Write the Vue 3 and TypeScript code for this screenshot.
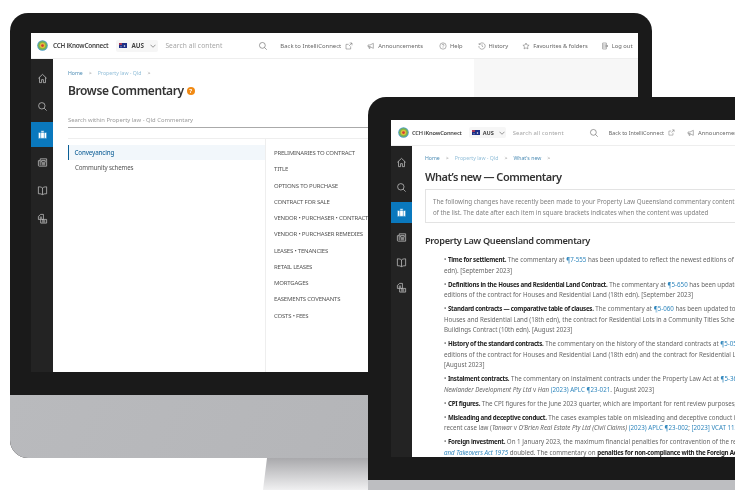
<script setup lang="ts">
const icons: Record<string, string> = {
  home: 'M3 11.5 12 3l9 8.5M5.5 9.5V21h4.5v-6.5h4V21h4.5V9.5',
  search: 'M10.5 3.5a7 7 0 1 0 0 14 7 7 0 0 0 0-14ZM15.7 15.7 21 21',
  brief: 'M3 7.5h18v13H3zM8.5 7.5V4h7v3.5M8 7.5v13M16 7.5v13',
  news: 'M7 4h14v16H5a2 2 0 0 1-2-2V8h4M7 4v14M10 7.5h8v4h-8zM10 14.5h8M10 17h8',
  book: 'M12 6.5C10 4.5 7 4 3 4v15c4 0 7 .5 9 2 2-1.5 5-2 9-2V4c-4 0-7 .5-9 2.5ZM12 6.5V21',
  docs: 'M3 7.500 8 3h6v11H3zM6 9h5M6 11.500h5M11 14h10v8H8v-8M11 17h7M11 19.500h7',
  ext: 'M17 13v8H3V7h8M14 3h7v7M21 3l-9 9',
  ann: 'M3 9h6l10-5v15L9 14H3zM6 14v5h3v-5',
  help: 'M12 2.5a9.5 9.5 0 1 0 0 19 9.5 9.5 0 0 0 0-19ZM9 9.5C9 7.5 10.500 6.500 12 6.500s3 1 3 3-3 2.500-3 4.500M12 16.500v1.500',
  hist: 'M4 7a9.500 9.500 0 1 1-1.500 5M3.500 3v4.500H8M12 7v5.500l3.500 2',
  star: 'M12 3l2.800 6 6.500.8-4.800 4.400 1.300 6.500L12 17.500l-5.800 3.200 1.300-6.500-4.800-4.400 6.500-.8z',
  out: 'M5 3h11v18H5zM5 9h11M5 15h11M13 12h8M18.500 9.500 21 12l-2.500 2.500'
}
const side = ['home', 'search', 'brief', 'news', 'book', 'docs']
const topics = ['PRELIMINARIES TO CONTRACT', 'TITLE', 'OPTIONS TO PURCHASE', 'CONTRACT FOR SALE', 'VENDOR • PURCHASER • CONTRACT TERMS', 'VENDOR • PURCHASER REMEDIES', 'LEASES • TENANCIES', 'RETAIL LEASES', 'MORTGAGES', 'EASEMENTS COVENANTS', 'COSTS • FEES']
const nav = [
  { icon: 'ann', label: 'Announcements', gap: 'n-ann' },
  { icon: 'help', label: 'Help', gap: 'n-help' },
  { icon: 'hist', label: 'History', gap: 'n-hist' },
  { icon: 'star', label: 'Favourites & folders', gap: 'n-star' },
  { icon: 'out', label: 'Log out', gap: 'n-out' }
]
</script>

<template>
  <div class="canvas">
    <div class="stand"></div>

    <section class="monitor m1">
      <div class="screen">
        <header class="top">
          <svg class="logo" viewBox="0 0 24 24"><circle cx="12" cy="12" r="11.500" fill="#4f9fc0"/><circle cx="12" cy="12" r="9.500" fill="#7fb446"/><circle cx="12" cy="12" r="6" fill="#d9c23c"/><circle cx="12" cy="12" r="3" fill="#d63a35"/></svg>
          <span class="brand">CCH iKnowConnect</span>
          <div class="pill">
            <svg class="flag" viewBox="0 0 16 10"><rect width="16" height="10" fill="#1c2f86"/><rect width="6" height="4" fill="#a5395a"/><circle cx="11" cy="6" r="1.500" fill="#fff"/><circle cx="4" cy="7.500" r="1" fill="#fff"/></svg>
            <b>AUS</b>
            <svg class="chev" viewBox="0 0 12 8"><path d="M1 1.500 6 6.500l5-5" fill="none" stroke="#555" stroke-width="1.200"/></svg>
          </div>
          <span class="ph">Search all content</span>
          <svg class="ic sicon" viewBox="0 0 24 24"><path :d="icons.search"/></svg>
          <span class="link back">Back to IntelliConnect</span>
          <svg class="ic small ext" viewBox="0 0 24 24"><path :d="icons.ext"/></svg>
          <span v-for="n in nav" :key="n.label" class="nav" :class="n.gap">
            <svg class="ic small" viewBox="0 0 24 24"><path :d="icons[n.icon]"/></svg>
            <span class="link">{{ n.label }}</span>
          </span>
        </header>
        <div class="body">
          <aside class="side">
            <div v-for="s in side" :key="s" class="sitem" :class="{ on: s === 'brief' }">
              <svg viewBox="0 0 24 24"><path :d="icons[s]"/></svg>
            </div>
          </aside>
          <main class="main">
            <div class="content">
              <div class="crumbs"><span class="dark">Home</span><i>&gt;</i><span>Property law - Qld</span><i>&gt;</i></div>
              <h1>Browse Commentary<span class="q">?</span></h1>
              <div class="within">Search within Property law - Qld Commentary</div>
              <div class="cols">
                <div class="left">
                  <div class="row sel">Conveyancing</div>
                  <div class="row">Community schemes</div>
                </div>
                <ul class="right">
                  <li v-for="t in topics" :key="t">{{ t }}</li>
                </ul>
              </div>
            </div>
            <div class="gutter"></div>
          </main>
        </div>
      </div>
      <div class="bezel"></div>
      <div class="chin"></div>
    </section>

    <section class="monitor m2">
      <div class="screen">
        <header class="top">
          <svg class="logo" viewBox="0 0 24 24"><circle cx="12" cy="12" r="11.500" fill="#4f9fc0"/><circle cx="12" cy="12" r="9.500" fill="#7fb446"/><circle cx="12" cy="12" r="6" fill="#d9c23c"/><circle cx="12" cy="12" r="3" fill="#d63a35"/></svg>
          <span class="brand">CCH iKnowConnect</span>
          <div class="pill">
            <svg class="flag" viewBox="0 0 16 10"><rect width="16" height="10" fill="#1c2f86"/><rect width="6" height="4" fill="#a5395a"/><circle cx="11" cy="6" r="1.500" fill="#fff"/><circle cx="4" cy="7.500" r="1" fill="#fff"/></svg>
            <b>AUS</b>
            <svg class="chev" viewBox="0 0 12 8"><path d="M1 1.500 6 6.500l5-5" fill="none" stroke="#555" stroke-width="1.200"/></svg>
          </div>
          <span class="ph">Search all content</span>
          <svg class="ic sicon" viewBox="0 0 24 24"><path :d="icons.search"/></svg>
          <span class="link back">Back to IntelliConnect</span>
          <svg class="ic small ext" viewBox="0 0 24 24"><path :d="icons.ext"/></svg>
          <span class="nav n-ann">
            <svg class="ic small" viewBox="0 0 24 24"><path :d="icons.ann"/></svg>
            <span class="link">Announcements</span>
          </span>
        </header>
        <div class="body">
          <aside class="side">
            <div v-for="s in side" :key="s" class="sitem" :class="{ on: s === 'brief' }">
              <svg viewBox="0 0 24 24"><path :d="icons[s]"/></svg>
            </div>
          </aside>
          <main class="main article">
            <div class="crumbs"><span class="dark">Home</span><i>&gt;</i><span>Property law - Qld</span><i>&gt;</i><span class="dark">What's new</span><i>&gt;</i></div>
            <h1>What’s new — Commentary</h1>
            <div class="callout">
              <p>The following changes have recently been made to your Property Law Queensland commentary content. Items are listed at the top</p>
              <p>of the list. The date after each item in square brackets indicates when the content was updated</p>
            </div>
            <h2>Property Law Queensland commentary</h2>
            <div class="para"><p>• <b>Time for settlement.</b> The commentary at <a>¶7-555</a> has been updated to reflect the newest editions of the contract for Houses and</p><p>edn). [September 2023]</p></div>
            <div class="para"><p>• <b>Definitions in the Houses and Residential Land Contract.</b> The commentary at <a>¶5-650</a> has been updated to reflect the newest</p><p>editions of the contract for Houses and Residential Land (18th edn). [September 2023]</p></div>
            <div class="para"><p>• <b>Standard contracts — comparative table of clauses.</b> The commentary at <a>¶5-060</a> has been updated to reflect the contract for</p><p>Houses and Residential Land (18th edn), the contract for Residential Lots in a Community Titles Scheme and the</p><p>Buildings Contract (10th edn). [August 2023]</p></div>
            <div class="para"><p>• <b>History of the standard contracts.</b> The commentary on the history of the standard contracts at <a>¶5-050</a> has been updated to</p><p>editions of the contract for Houses and Residential Land (18th edn) and the contract for Residential Lots in a Community</p><p>[August 2023]</p></div>
            <div class="para"><p>• <b>Instalment contracts.</b> The commentary on instalment contracts under the Property Law Act at <a>¶5-360</a> has been updated</p><p><em>Newlander Development Pty Ltd</em> v <em>Han</em> <a>(2023) APLC ¶23-021</a>. [August 2023]</p></div>
            <div class="para"><p>• <b>CPI figures.</b> The CPI figures for the June 2023 quarter, which are important for rent review purposes, have been added</p></div>
            <div class="para"><p>• <b>Misleading and deceptive conduct.</b> The cases examples table on misleading and deceptive conduct in the sale of land</p><p>recent case law (<em>Tanwar</em> v <em>O'Brien Real Estate Pty Ltd (Civil Claims)</em> <a>(2023) APLC ¶23-002</a>; <a>[2023] VCAT 113</a></p></div>
            <div class="para"><p>• <b>Foreign investment.</b> On 1 January 2023, the maximum financial penalties for contravention of the residential land</p><p><a><em>and Takeovers Act 1975</em></a> doubled. The commentary on <b>penalties for non-compliance with the Foreign Acquisitions</b></p></div>
          </main>
        </div>
      </div>
      <div class="bezel"></div>
      <div class="chin"></div>
    </section>
  </div>
</template>

<style scoped>
.canvas {
  position: relative;
  width: 735px;
  height: 490px;
  overflow: hidden;
  background: #fff;
  font-family: "Noto Sans", "Open Sans", sans-serif;
  color: #555;
}
.stand {
  position: absolute;
  left: 263px;
  top: 458px;
  width: 140px;
  height: 32px;
  clip-path: polygon(4px 0, 100% 0, 100% 100%, 0 100%);
  background: linear-gradient(#a9a9ac, #f0f0f1);
}
.monitor {
  position: absolute;
  background: #1a1a1a;
  overflow: hidden;
  display: flex;
  flex-direction: column;
}
.monitor > * { flex: none; }
.m1 {
  left: 10px;
  top: 13px;
  width: 642px;
  height: 445px;
  border-radius: 18px;
  padding: 20px 14px 0 21px;
  box-sizing: border-box;
}
.m2 {
  left: 368px;
  top: 97px;
  width: 420px;
  height: 420px;
  border-radius: 18px 18px 0 0;
  padding: 23px 0 0 23px;
  box-sizing: border-box;
}
.m1 .bezel { height: 23px; }
.m1 .chin { height: 63px; margin: 0 -14px 0 -21px; background: linear-gradient(115deg, #b9babd, #b4b5b8 60%, #bcbdc0); }
.m2 .bezel { height: 23px; }
.m2 .chin { height: 40px; margin-left: -23px; background: #bdbec1; }
.screen {
  background: #fff;
  display: flex;
  flex-direction: column;
  overflow: hidden;
  filter: blur(0.3px);
}
.m1 .screen { height: 339px; }
.m2 .screen { height: 337px; }
.top {
  height: 25px;
  flex: none;
  display: flex;
  align-items: center;
  border-bottom: 1px solid #eee;
  white-space: nowrap;
}
.logo { flex: none; width: 11px; height: 11px; margin-left: 6px; }
.brand { font-size: 6.400px; font-weight: 600; color: #444; margin-left: 5px; letter-spacing: -0.25px; }
.pill {
  display: flex;
  align-items: center;
  height: 12px;
  width: 42px;
  background: #f6f6f6;
  border-radius: 2px;
  margin-left: 8px;
  flex: none;
}
.flag { width: 8px; height: 5px; margin-left: 3px; flex: none; }
.pill b { font-size: 6.300px; color: #444; margin-left: 4px; }
.chev { width: 6px; height: 4px; margin-left: 6px; flex: none; }
.ph { font-size: 6.600px; color: #a5a5a5; margin-left: 7px; letter-spacing: .1px; }
.ic { flex: none; fill: none; stroke: #666; stroke-width: 1.500; }
.sicon { width: 10px; height: 10px; }
.small { width: 8px; height: 8px; }
.link { font-size: 5.800px; color: #666; }
.nav { display: inline-flex; align-items: center; gap: 3px; }
.m1 .sicon { margin-left: 36px; }
.m1 .back { margin-left: 12px; font-size: 5.950px; }
.m1 .ext { margin-left: 4px; }
.m1 .n-ann { margin-left: 14px; }
.m1 .n-help { margin-left: 16px; }
.m1 .n-hist { margin-left: 15px; }
.m1 .n-star { margin-left: 14px; }
.m1 .n-out { margin-left: 13px; }
.m2 .logo { margin-left: 7px; }
.m2 .brand { font-size: 5.700px; margin-left: 3px; letter-spacing: -0.2px; }
.m2 .pill { margin-left: 7px; width: 37px; height: 11px; }
.m2 .pill b { font-size: 5.600px; margin-left: 3px; }
.m2 .chev { margin-left: 5px; }
.m2 .ph { font-size: 5.900px; margin-left: 7px; }
.m2 .sicon { margin-left: 25px; }
.m2 .back { margin-left: 10px; font-size: 5.400px; }
.m2 .ext { margin-left: 4px; width: 7px; height: 7px; }
.m2 .n-ann { margin-left: 12px; }
.body { flex: 1; display: flex; min-height: 0; }
.side { width: 22px; flex: none; background: #232323; padding-top: 6.500px; box-sizing: border-box; display: flex; flex-direction: column; gap: 3.200px; }
.m2 .side { width: 21px; padding-top: 5.500px; gap: 4.200px; }
.sitem { height: 25px; display: flex; align-items: center; justify-content: center; flex: none; }
.m2 .sitem { height: 21px; }
.sitem svg { width: 11px; height: 11px; fill: none; stroke: #c8c8c8; stroke-width: 1.600; }
.sitem.on { background: #0a78bd; }
.sitem.on svg { fill: #fff; stroke: #0a78bd; stroke-width: 1.200; }
.main { flex: 1; display: flex; min-width: 0; }
.content { width: 421px; flex: none; padding: 10px 0 0 15px; box-sizing: border-box; display: flex; flex-direction: column; }
.gutter { flex: 1; background: #f7f7f7; }
.crumbs { font-size: 5.200px; color: #93bfd9; line-height: 8px; display: flex; align-items: center; white-space: nowrap; }
.crumbs .dark { color: #4e8db5; }
.crumbs i { font-style: normal; color: #888; margin: 0 6px; }
h1 {
  margin: 0;
  font-size: 12px;
  font-weight: 600;
  color: #333;
  line-height: 18px;
  margin-top: 5px;
  letter-spacing: -0.4px;
  display: flex;
  align-items: center;
  white-space: nowrap;
}
.q {
  width: 8px;
  height: 8px;
  margin-left: 3px;
  border-radius: 50%;
  background: #f18a14;
  color: #fff;
  font-size: 6px;
  font-weight: 700;
  line-height: 8px;
  letter-spacing: 0;
  text-align: center;
}
.within { font-size: 5.850px; color: #9a9a9a; margin-top: 15px; line-height: 11px; padding-bottom: 1px; border-bottom: 1px solid #aaa; }
.cols { flex: 1; margin-top: 10px; border-top: 1px solid #eee; display: flex; min-height: 0; }
.left { width: 198px; flex: none; padding-top: 6px; border-right: 1px solid #eee; box-sizing: border-box; }
.row { font-size: 6.200px; letter-spacing: -0.15px; line-height: 15px; padding-left: 7px; color: #555; }
.row.sel { background: #f2f7fb; border-left: 1.500px solid #0a5f96; padding-left: 5.500px; color: #1f6a9e; font-weight: 500; }
.right { margin: 0; padding: 6px 0 0 8px; list-style: none; }
.right li { font-size: 6px; letter-spacing: -0.2px; line-height: 16.250px; color: #555; white-space: nowrap; }
.article { flex-direction: column; padding: 8px 0 0 13px; box-sizing: border-box; }
.article h1 { font-size: 11px; letter-spacing: -0.5px; margin-top: 6px; line-height: 17px; }
.callout { margin-top: 4px; width: 420px; height: 34px; box-sizing: border-box; border: 1px solid #e3e3e3; padding: 7px 0 0 7px; flex: none; }
.callout p { margin: 0; font-size: 6.200px; line-height: 10.500px; color: #808080; white-space: nowrap; }
h2 { margin: 10px 0 6px; font-size: 9.200px; font-weight: 600; color: #333; line-height: 16px; letter-spacing: -0.3px; white-space: nowrap; }
.para { margin: 0 0 3.500px 19px; }
.para p { margin: 0; font-size: 6.200px; line-height: 10.500px; color: #666; white-space: nowrap; }
.para b { color: #222; font-weight: 700; letter-spacing: -0.25px; }
.para a { color: #2f86bd; }
.para em { font-style: italic; }
</style>
